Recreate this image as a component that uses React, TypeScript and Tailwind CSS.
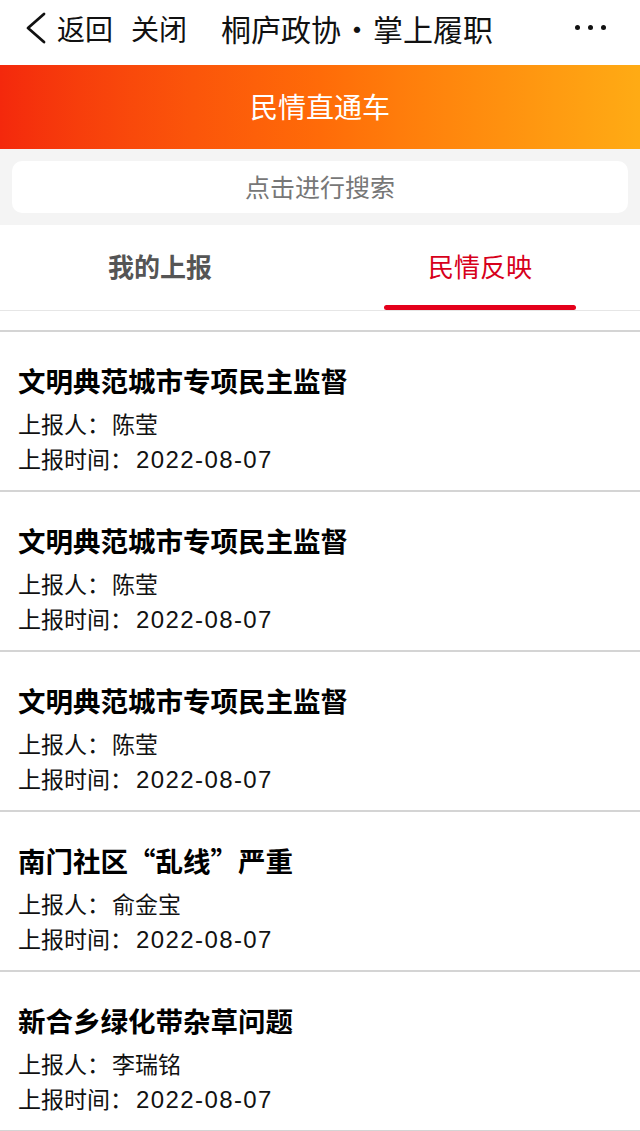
interface Report {
  title: string;
  reporter: string;
  date: string;
}

const reports: Report[] = [
  { title: "文明典范城市专项民主监督", reporter: "陈莹", date: "2022-08-07" },
  { title: "文明典范城市专项民主监督", reporter: "陈莹", date: "2022-08-07" },
  { title: "文明典范城市专项民主监督", reporter: "陈莹", date: "2022-08-07" },
  { title: "南门社区“乱线”严重", reporter: "俞金宝", date: "2022-08-07" },
  { title: "新合乡绿化带杂草问题", reporter: "李瑞铭", date: "2022-08-07" },
];

const font = "font-['Noto_Sans_CJK_SC',sans-serif]";

function NavBar() {
  return (
    <div className="flex h-[65px] items-center bg-white pb-[10px] pl-[22px] pr-[34px] text-[28px] leading-none text-[#111]">
      <svg width="26" height="34" viewBox="0 0 26 34" fill="none" className="mr-[9px]">
        <path d="M22 3 L6 17 L22 31" stroke="#111" strokeWidth="2.8" strokeLinecap="round" strokeLinejoin="round" />
      </svg>
      <span>返回</span>
      <span className="ml-[18px]">关闭</span>
      <span className="ml-[34px] text-[30px]">
        桐庐政协<span className="mx-[1px]">·</span>掌上履职
      </span>
      <div className="ml-auto flex gap-[8px]">
        <span className="h-[5px] w-[5px] rounded-full bg-[#111]" />
        <span className="h-[5px] w-[5px] rounded-full bg-[#111]" />
        <span className="h-[5px] w-[5px] rounded-full bg-[#111]" />
      </div>
    </div>
  );
}

function ReportItem({ report }: { report: Report }) {
  return (
    <div className="border-b-2 border-[#d4d4d4] px-[18px] pt-[30px] pb-[14px]">
      <div className="text-[27.5px] font-bold leading-[36px] text-black">{report.title}</div>
      <div className="mt-[8px] h-[35px] text-[23px] leading-[35px] text-[#111]">
        上报人：<span className="ml-[2px]">{report.reporter}</span>
      </div>
      <div className="h-[35px] text-[23px] leading-[35px] text-[#111]">
        上报时间：
        <span className="ml-[3px] font-['Liberation_Sans',sans-serif] text-[24px] leading-none tracking-[1.4px]">
          {report.date}
        </span>
      </div>
    </div>
  );
}

export default function App() {
  return (
    <div className={`${font} min-h-[1131px] w-[640px] bg-white`}>
      <NavBar />

      <div className="flex h-[84px] items-center justify-center bg-gradient-to-r from-[#f4280c] via-[#ff6b08] to-[#ffab14] pb-[2px] text-[28px] text-white">
        民情直通车
      </div>

      <div className="bg-[#f4f4f4] px-[12px] py-[12px]">
        <div className="flex h-[52px] items-center justify-center rounded-[10px] bg-white text-[25px] text-[#777]">
          点击进行搜索
        </div>
      </div>

      <div className="flex h-[86px] border-b border-[#e6e6e6] bg-white">
        <div className="flex flex-1 items-center justify-center pb-[4px] text-[26px] font-bold text-[#555]">
          我的上报
        </div>
        <div className="relative flex flex-1 items-center justify-center pb-[4px] text-[26px] text-[#d7001b]">
          民情反映
          <span className="absolute bottom-0 left-1/2 h-[5px] w-[192px] -translate-x-1/2 rounded-full bg-[#e4001b]" />
        </div>
      </div>

      <div className="h-[21px] border-b-2 border-[#d4d4d4]" />

      <div>
        {reports.map((r, i) => (
          <ReportItem key={i} report={r} />
        ))}
      </div>
    </div>
  );
}
